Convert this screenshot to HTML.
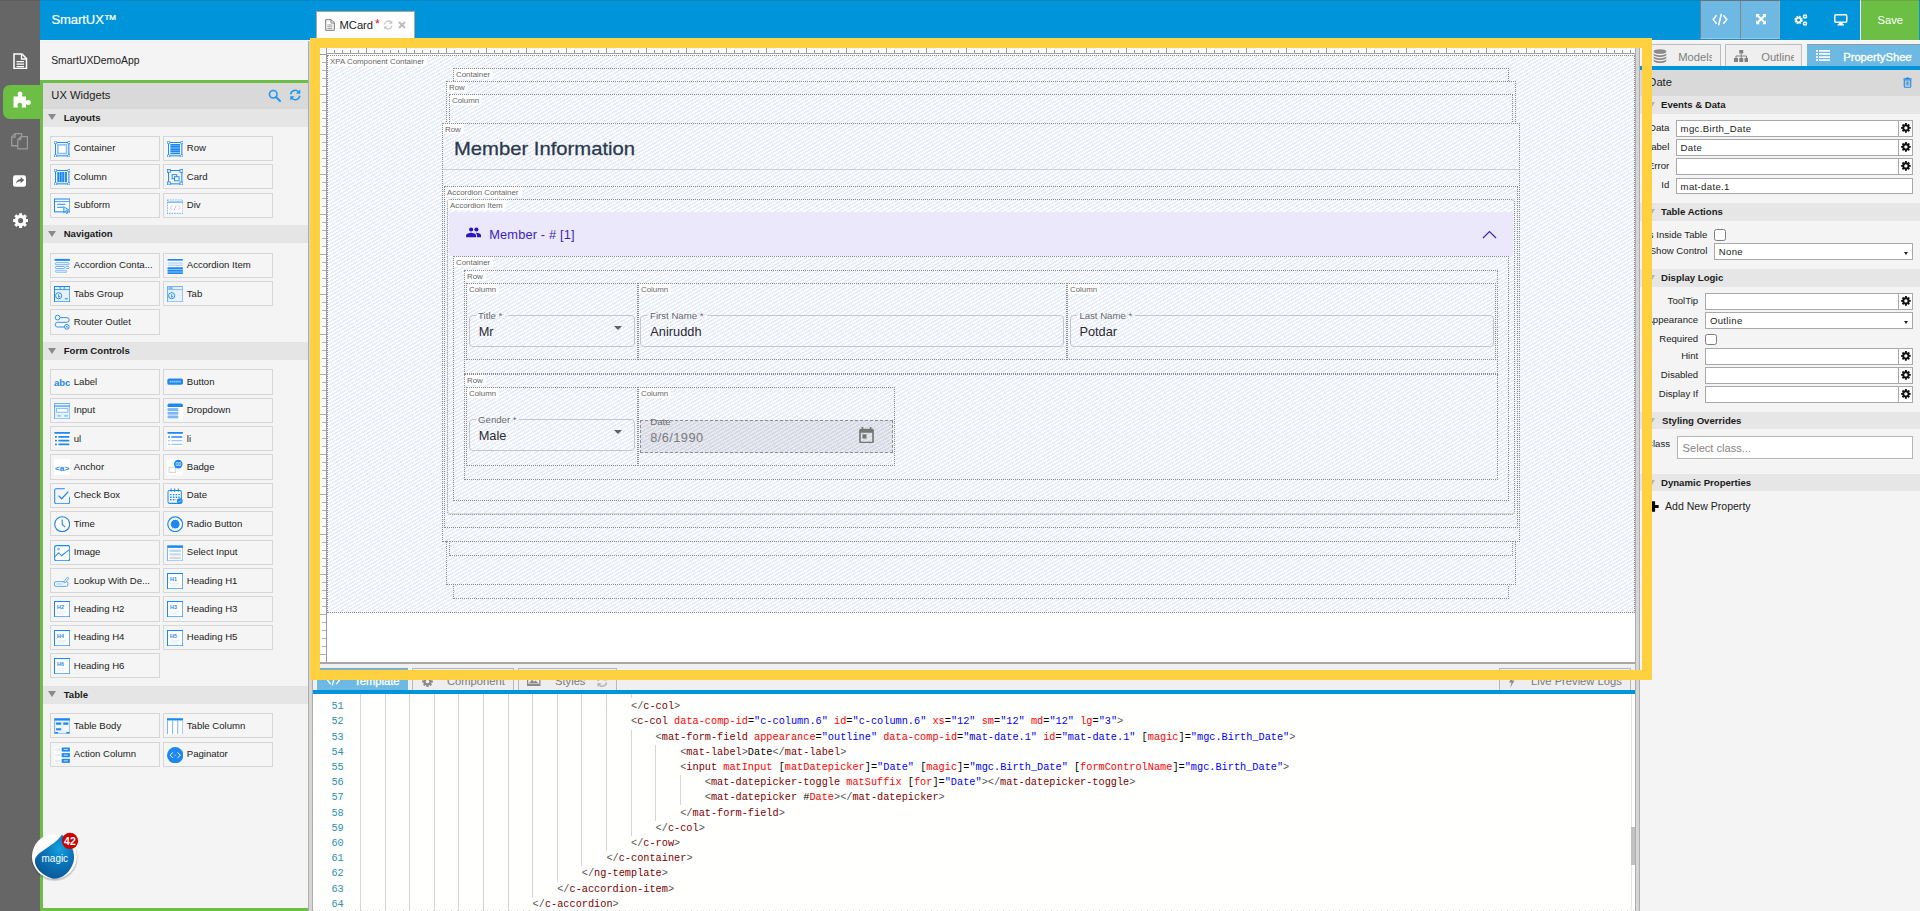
<!DOCTYPE html>
<html lang="en"><head><meta charset="utf-8"><title>SmartUX</title>
<style>
*{box-sizing:border-box;margin:0;padding:0}
html,body{width:1920px;height:911px;overflow:hidden;background:#f4f4f4}
body{position:relative;font-family:"Liberation Sans",sans-serif;font-size:9.6px;color:#222}
div,svg{position:absolute}
.t{white-space:nowrap;line-height:1}
.b{font-weight:bold}
.hatch{background-color:#fff;background-image:repeating-linear-gradient(150deg,#e6ecfe 0,#e6ecfe 1.6px,#fff 1.6px,#fff 3.2px)}
.dz{border:1px dotted #8e8e8e}
.lab{background:#fff;color:#666;font-size:7.9px;line-height:11.6px;height:10px;padding:0 3px 0 2px;white-space:nowrap;border-radius:0 0 2px 0}
.wi{border:1px solid #d6d6d6;background:#f5f5f5;width:109.6px;height:24.6px}
.wi .t{left:22.750px;top:5.75px;font-size:9.6px;color:#222}
.wi svg{left:2.7px;top:3.9px;width:16.4px;height:16.4px}
.sh{background:#e5e5e5}
.sh .t{font-weight:bold;font-size:9.6px;top:3.6px;color:#1a1a1a}
.tri{width:0;height:0;border-left:4.7px solid transparent;border-right:4.7px solid transparent;border-top:6px solid #8a8a8a}
.inp{background:#fff;border:1px solid #a9a9a9;height:16px}
.inp .t{left:3.300px;top:2.900px;font-size:9.600px;letter-spacing:0.330px;color:#222}
.gb{background:#fff;border:1px solid #a9a9a9;border-left:none;height:16px;width:15px}
.pl{font-size:9.6px;color:#222;text-align:right;white-space:nowrap;line-height:1}
.code{font-family:"Liberation Mono",monospace;font-size:10.25px;white-space:pre;line-height:15.2px;height:15.2px;color:#000}
.tg{color:#800000}.an{color:#ff0000}.av{color:#0000ff}.dl{color:#555}
.ln{white-space:nowrap;font-family:"Liberation Mono",monospace;font-size:10.25px;line-height:15.2px;color:#2b91af;text-align:right;width:30px}
.rb{font-family:"Liberation Sans",sans-serif}
</style></head>
<body>
<div style="left:40px;top:0px;width:1880px;height:40px;background:#0095da"></div><div class="t" style="left:51.4px;top:12.9px;color:#fff;font-size:13px;letter-spacing:-0.05px;-webkit-text-stroke:0.200px #fff">SmartUX&trade;</div><div style="left:316px;top:11px;width:98.5px;height:28px;background:#fff;border-top:1px solid #aaa09c;border-left:1px solid #b0a8a4;border-right:1px solid #b0a8a4"></div><svg style="left:325px;top:19px;width:10px;height:12px" viewBox="0 0 10 12"><path d="M0.7 0.7h5.6l3 3v7.6h-8.6z" fill="#fff" stroke="#777" stroke-width="1"/><path d="M6 0.7v3.3h3.3" fill="none" stroke="#777" stroke-width="0.9"/><path d="M2.3 6h5M2.3 7.8h5M2.3 9.6h5" stroke="#888" stroke-width="0.8"/></svg><div class="t" style="left:339.5px;top:19.6px;font-size:11.2px;color:#222">MCard</div><div class="t" style="left:375px;top:17.6px;font-size:12.5px;color:#d32030">*</div><svg style="left:383px;top:20px;width:10.5px;height:10px" viewBox="0 0 21 20"><path d="M3 9a7.5 7.5 0 0 1 13-4.5M18 11a7.5 7.5 0 0 1-13 4.5" fill="none" stroke="#c4c4c4" stroke-width="2.6"/><path d="M18.5 1v6.5h-6.5zM2.5 19v-6.5h6.5z" fill="#c4c4c4"/></svg><svg style="left:397.5px;top:21px;width:8px;height:8px" viewBox="0 0 8 8"><path d="M1 1l6 6M7 1l-6 6" stroke="#bdbdbd" stroke-width="2.1"/></svg><div style="left:1700px;top:0px;width:40px;height:39px;background:#6db9e3;border-top:1px solid #6b7f8c;border-left:1px solid #7d7d7d;border-bottom:1px solid #bdbdbd"></div><div style="left:1740px;top:0px;width:40px;height:39px;background:#6db9e3;border-top:1px solid #6b7f8c;border-left:1px solid #858585;border-bottom:1px solid #bdbdbd;border-right:1px solid #a3b1ba"></div><svg style="left:1712px;top:13px;width:16px;height:13px" viewBox="0 0 16 13"><path d="M4.6 2.2L1.2 6.5l3.4 4.3M11.4 2.2l3.4 4.3-3.4 4.3M9.4 0.8L6.6 12.2" fill="none" stroke="#fff" stroke-width="1.5"/></svg><svg style="left:1755.600px;top:14.400px;width:10.200px;height:10.200px" viewBox="0 0 11 11"><path d="M0 0h4.2L2.9 1.3 5.5 3.9 8.1 1.3 6.8 0H11v4.2L9.7 2.9 7.1 5.5 9.7 8.1 11 6.8V11H6.8l1.3-1.3L5.5 7.1 2.9 9.7 4.2 11H0V6.8l1.3 1.3L3.9 5.5 1.3 2.9 0 4.2z" fill="#fff"/></svg><svg style="left:1794px;top:14px;width:14px;height:12px" viewBox="0 0 14 12"><circle cx="4.6" cy="6" r="3" fill="none" stroke="#fff" stroke-width="2.3" stroke-dasharray="1.6 0.75"/><circle cx="4.6" cy="6" r="2.3" fill="none" stroke="#fff" stroke-width="1.6"/><circle cx="11" cy="2.6" r="1.5" fill="none" stroke="#fff" stroke-width="1.5"/><circle cx="11" cy="9.4" r="1.5" fill="none" stroke="#fff" stroke-width="1.5"/></svg><svg style="left:1834px;top:14px;width:13.5px;height:11.5px" viewBox="0 0 27 23"><rect x="1.5" y="1.5" width="24" height="15" rx="2.5" fill="none" stroke="#fff" stroke-width="3"/><path d="M10 17h7l1 4h-9z M7 20.5h13v2.5h-13z" fill="#fff"/></svg><div style="left:1860px;top:0px;width:1px;height:40px;background:#f4fbff"></div><div style="left:1861px;top:0px;width:58px;height:40px;background:#6cbe45"></div><div class="t" style="left:1877.5px;top:15.1px;color:#fff;font-size:11.2px">Save</div><div style="left:0px;top:0px;width:40px;height:911px;background:#666"></div><div style="left:3px;top:85px;width:40px;height:34px;background:#6cbe45;border-radius:7px 0 0 7px"></div><svg style="left:13px;top:52.5px;width:14.5px;height:16.5px" viewBox="0 0 29 33"><path d="M2 2h16l9 9v20h-25z" fill="none" stroke="#fff" stroke-width="3"/><path d="M17 2v10h10" fill="none" stroke="#fff" stroke-width="2.6"/><path d="M7 16h15v2.6h-15zM7 21h15v2.6h-15zM7 26h15v2.6h-15z" fill="#fff"/></svg><svg style="left:12.7px;top:90px;width:18px;height:17.5px" viewBox="0 0 36 35"><path d="M1 13h8.5c1 0 1.4-.8.9-1.8C9.6 9.900 9.3 9 9.300 7.800 9.300 5 11.500 3 14.200 3s4.900 2 4.900 4.800c0 1.200-.4 2.200-1 3.300-.5 1-.2 1.900.8 1.900H26v7.200c0 1 .8 1.400 1.800.9 1-.6 2-1 3.200-1 2.700 0 4.700 2.200 4.700 4.900s-2 4.900-4.700 4.900c-1.200 0-2.200-.4-3.200-1-1-.5-1.800-.1-1.800.9V35h-7.500c-1 0-1.400-.800-.9-1.800.6-1 1-2 1-3.200 0-2.700-2.200-4.700-4.900-4.700S8.800 27.300 8.800 30c0 1.200.4 2.200 1 3.200.5 1 .1 1.800-.9 1.800H1z" fill="#fff"/></svg><svg style="left:11.300px;top:133px;width:17.200px;height:16.500px" viewBox="0 0 34.400 33"><path d="M8.300 1.300h13.200v24.200h-20.200v-17.200z" fill="none" stroke="#9c9c9c" stroke-width="2.600" stroke-linejoin="round"/><path d="M8.300 1.300v7h-7" fill="none" stroke="#9c9c9c" stroke-width="2.400"/><path d="M19.600 7.400h13.400v24.300h-19.400v-18.300z" fill="#666" stroke="#9c9c9c" stroke-width="2.600" stroke-linejoin="round"/><path d="M19.600 7.400v6h-6" fill="none" stroke="#9c9c9c" stroke-width="2.400"/></svg><svg style="left:13.200px;top:175px;width:13px;height:12px" viewBox="0 0 29 26"><rect x="0" y="0" width="29" height="26" rx="5" fill="#fff"/><path d="M17 4l8 7-8 7v-4.300c-5 0-8 1.500-10.500 5.300 0.500-6 4-10 10.500-10.700z" fill="#666"/></svg><svg style="left:12.700px;top:213.300px;width:15.200px;height:15.200px" viewBox="0 0 20 20"><path fill-rule="evenodd" d="M17.35 8.05L19.81 8.05L19.81 11.95L17.35 11.95L16.57 13.82L18.31 15.56L15.56 18.31L13.82 16.57L11.95 17.35L11.95 19.81L8.05 19.81L8.05 17.35L6.18 16.57L4.44 18.31L1.69 15.56L3.43 13.82L2.65 11.95L0.19 11.95L0.19 8.05L2.65 8.05L3.43 6.18L1.69 4.44L4.44 1.69L6.18 3.43L8.05 2.65L8.05 0.19L11.95 0.19L11.95 2.65L13.82 3.43L15.56 1.69L18.31 4.44L16.57 6.18ZM13.40 10.00A3.4 3.4 0 1 0 6.60 10.00A3.4 3.4 0 1 0 13.40 10.00Z" fill="#fff"/></svg><div style="left:40px;top:40px;width:268px;height:871px;background:#f4f4f4"></div><div class="t" style="left:51.2px;top:55.5px;font-size:10.4px;color:#222">SmartUXDemoApp</div><div style="left:40px;top:80px;width:268px;height:3px;background:#6cbe45"></div><div style="left:40px;top:80px;width:3px;height:831px;background:#6cbe45"></div><div style="left:40px;top:908px;width:268px;height:3px;background:#6cbe45"></div><div style="left:43px;top:83px;width:265px;height:26px;background:#d9d9d9"></div><div class="t" style="left:51.3px;top:90px;font-size:11.2px;color:#1c1c1c">UX Widgets</div><svg style="left:267.5px;top:88.5px;width:13px;height:13px" viewBox="0 0 26 26"><circle cx="10.5" cy="10.5" r="7.6" fill="none" stroke="#2196f3" stroke-width="3.2"/><path d="M16 16l8 8" stroke="#2196f3" stroke-width="4" stroke-linecap="round"/></svg><svg style="left:288.5px;top:89px;width:12.5px;height:12px" viewBox="0 0 25 24"><path d="M3.5 10.500a9 9 0 0 1 15.500-5M21.500 13.500a9 9 0 0 1-15.500 5" fill="none" stroke="#2196f3" stroke-width="3.3"/><path d="M22.500 1v8.500h-8.500zM2.500 23v-8.500h8.500z" fill="#2196f3"/></svg><div class="sh" style="left:43px;top:108.8px;width:265px;height:17.8px;"><div class="tri" style="left:4.800px;top:5.600px"></div><div class="t b" style="left:20.7px;top:3.85px;">Layouts</div></div><div class="wi" style="left:50px;top:136.00px;height:25px"><svg viewBox="0 0 16 16"><rect x="1.5" y="1.5" width="13" height="13" fill="#fff" stroke="#1e88f0" stroke-width="1"/><rect x="3.800" y="3.800" width="8.400" height="8.400" fill="#fff" stroke="#8ec0f7" stroke-width="1.600"/><circle cx="1.5" cy="1.5" r="1.3" fill="#fff" stroke="#1e88f0" stroke-width="0.8"/><circle cx="14.5" cy="1.5" r="1.3" fill="#fff" stroke="#1e88f0" stroke-width="0.8"/><circle cx="1.5" cy="14.5" r="1.3" fill="#fff" stroke="#1e88f0" stroke-width="0.8"/><circle cx="14.5" cy="14.5" r="1.3" fill="#fff" stroke="#1e88f0" stroke-width="0.8"/></svg><div class="t" style="top:5.75px">Container</div></div><div class="wi" style="left:163px;top:136.00px;height:25px"><svg viewBox="0 0 16 16"><rect x="1.5" y="1.5" width="13" height="13" fill="#fff" stroke="#1e88f0" stroke-width="1"/><path d="M3.200 3.700h9.600M3.200 5.800h9.600M3.200 7.900h9.600M3.200 10h9.600M3.200 12.100h9.600" stroke="#1e88f0" stroke-width="1.700"/><circle cx="1.5" cy="1.5" r="1.3" fill="#fff" stroke="#1e88f0" stroke-width="0.8"/><circle cx="14.5" cy="1.5" r="1.3" fill="#fff" stroke="#1e88f0" stroke-width="0.8"/><circle cx="1.5" cy="14.5" r="1.3" fill="#fff" stroke="#1e88f0" stroke-width="0.8"/><circle cx="14.5" cy="14.5" r="1.3" fill="#fff" stroke="#1e88f0" stroke-width="0.8"/></svg><div class="t" style="top:5.75px">Row</div></div><div class="wi" style="left:50px;top:164.00px;height:25px"><svg viewBox="0 0 16 16"><rect x="1.5" y="1.5" width="13" height="13" fill="#fff" stroke="#1e88f0" stroke-width="1"/><path d="M4.200 3v10M6.600 3v10M9 3v10M11.600 3v10" stroke="#1e88f0" stroke-width="2"/><circle cx="1.5" cy="1.5" r="1.3" fill="#fff" stroke="#1e88f0" stroke-width="0.8"/><circle cx="14.5" cy="1.5" r="1.3" fill="#fff" stroke="#1e88f0" stroke-width="0.8"/><circle cx="1.5" cy="14.5" r="1.3" fill="#fff" stroke="#1e88f0" stroke-width="0.8"/><circle cx="14.5" cy="14.5" r="1.3" fill="#fff" stroke="#1e88f0" stroke-width="0.8"/></svg><div class="t" style="top:6.75px">Column</div></div><div class="wi" style="left:163px;top:164.00px;height:25px"><svg viewBox="0 0 16 16"><rect x="1.5" y="1.5" width="13" height="13" fill="none" stroke="#1e88f0" stroke-width="1"/><rect x="5" y="5.500" width="4.500" height="4" fill="none" stroke="#1e88f0" stroke-width="0.9"/><rect x="7.300" y="7.500" width="4.500" height="4" fill="#f4f4f4" stroke="#1e88f0" stroke-width="0.9"/><rect x="0.4" y="0.4" width="3" height="3" fill="#cfe3fb" stroke="#1e88f0" stroke-width="0.7"/><rect x="12.6" y="0.4" width="3" height="3" fill="#cfe3fb" stroke="#1e88f0" stroke-width="0.7"/><rect x="0.4" y="12.6" width="3" height="3" fill="#cfe3fb" stroke="#1e88f0" stroke-width="0.7"/><rect x="12.6" y="12.6" width="3" height="3" fill="#cfe3fb" stroke="#1e88f0" stroke-width="0.7"/></svg><div class="t" style="top:6.75px">Card</div></div><div class="wi" style="left:50px;top:193.00px;height:25px"><svg viewBox="0 0 16 16"><rect x="0.500" y="1" width="15" height="12.500" fill="#fff" stroke="#1e88f0" stroke-width="1"/><path d="M0.500 3.500h15" stroke="#1e88f0" stroke-width="0.8"/><path d="M3 6h8M3 9h6" stroke="#1e88f0" stroke-width="1"/><path d="M9.500 8.500l5 3.200-2.200.5 1.200 2.500-1.200.6-1.200-2.500-1.600 1.500z" fill="#cfe3fb" stroke="#1e88f0" stroke-width="0.8"/></svg><div class="t" style="top:5.75px">Subform</div></div><div class="wi" style="left:163px;top:193.00px;height:25px"><svg viewBox="0 0 16 16"><rect x="0.500" y="2" width="15" height="13" fill="#fff" stroke="#7db6f5" stroke-width="1" stroke-dasharray="1.500 1"/><path d="M0.500 4h15" stroke="#7db6f5" stroke-width="1.500"/><path d="M5 7.500l-2 2 2 2M11 7.500l2 2-2 2M9 7l-2 5" fill="none" stroke="#c5b8f0" stroke-width="0.9"/></svg><div class="t" style="top:5.75px">Div</div></div><div class="sh" style="left:43px;top:225px;width:265px;height:17.8px;"><div class="tri" style="left:4.800px;top:5.600px"></div><div class="t b" style="left:20.7px;top:3.85px;">Navigation</div></div><div class="wi" style="left:50px;top:253.00px;height:25px"><svg viewBox="0 0 16 16"><rect x="0" y="0" width="16" height="16" fill="#fff"/><path d="M0.500 1.800h15" stroke="#1e88f0" stroke-width="2"/><rect x="1.200" y="4.600" width="13.600" height="2" rx="0.800" fill="#fff" stroke="#4b9cf3" stroke-width="0.800"/><rect x="1.200" y="8.300" width="9" height="2" rx="0.800" fill="#fff" stroke="#4b9cf3" stroke-width="0.800"/><rect x="11.400" y="8.300" width="3.400" height="2" rx="0.800" fill="#fff" stroke="#4b9cf3" stroke-width="0.800"/><rect x="1.200" y="12" width="11.500" height="2" rx="0.800" fill="#dbeafd" stroke="#7db6f5" stroke-width="0.800"/></svg><div class="t" style="top:5.75px">Accordion Conta...</div></div><div class="wi" style="left:163px;top:253.00px;height:25px"><svg viewBox="0 0 16 16"><rect x="0" y="0" width="16" height="16" fill="#fff"/><path d="M0.500 1.800h15" stroke="#1e88f0" stroke-width="1.600"/><path d="M0.500 4.800h15M0.500 7h15" stroke="#b9d6fa" stroke-width="1.400"/><path d="M0.500 10h15M0.500 12.500h15M0.500 15h15" stroke="#1e88f0" stroke-width="2"/></svg><div class="t" style="top:5.75px">Accordion Item</div></div><div class="wi" style="left:50px;top:281.00px;height:25px"><svg viewBox="0 0 16 16"><rect x="0.500" y="0.500" width="15" height="15" fill="#e8f2fe" stroke="#1e88f0" stroke-width="1"/><path d="M0.500 3.500h15M6 0.500v3M10 0.500v3" stroke="#1e88f0" stroke-width="0.8"/><circle cx="4.500" cy="9.500" r="3" fill="none" stroke="#1e88f0" stroke-width="0.9"/><path d="M4.500 8v3l1.500-1" fill="none" stroke="#1e88f0" stroke-width="0.8"/><path d="M10.500 12.500h3" stroke="#1e88f0" stroke-width="1"/></svg><div class="t" style="top:6.75px">Tabs Group</div></div><div class="wi" style="left:163px;top:281.00px;height:25px"><svg viewBox="0 0 16 16"><rect x="0.500" y="0.500" width="15" height="15" fill="#e8f2fe" stroke="#6fb0f6" stroke-width="1"/><path d="M0.500 3.500h15" stroke="#6fb0f6" stroke-width="0.8"/><path d="M1.500 2h4" stroke="#1e88f0" stroke-width="1"/><circle cx="4.500" cy="9.500" r="3" fill="none" stroke="#1e88f0" stroke-width="0.9"/><path d="M4.500 8v3l1.500-1" fill="none" stroke="#1e88f0" stroke-width="0.800"/></svg><div class="t" style="top:6.75px">Tab</div></div><div class="wi" style="left:50px;top:309.00px;height:26px"><svg viewBox="0 0 16 16"><circle cx="3.500" cy="3.500" r="2.300" fill="none" stroke="#1e88f0" stroke-width="0.9"/><circle cx="12.500" cy="12.500" r="2.300" fill="none" stroke="#1e88f0" stroke-width="0.900"/><path d="M6 3.500h6.500a2.300 2.300 0 0 1 0 4.600h-9a2.300 2.300 0 0 0 0 4.600h6.500" fill="none" stroke="#1e88f0" stroke-width="0.900"/><path d="M11.600 11.600l1.800 1.800M13.400 11.600l-1.800 1.800" stroke="#1e88f0" stroke-width="0.700"/></svg><div class="t" style="top:6.75px">Router Outlet</div></div><div class="sh" style="left:43px;top:342px;width:265px;height:17.8px;"><div class="tri" style="left:4.800px;top:5.600px"></div><div class="t b" style="left:20.7px;top:3.85px;">Form Controls</div></div><div class="wi" style="left:50px;top:369.00px;height:26px"><svg viewBox="0 0 16 16"><text x="0" y="12" font-family="Liberation Sans,sans-serif" font-weight="bold" font-size="9.500" fill="#1e88f0" textLength="16" lengthAdjust="spacingAndGlyphs">abc</text></svg><div class="t" style="top:6.75px">Label</div></div><div class="wi" style="left:163px;top:369.00px;height:26px"><svg viewBox="0 0 16 16"><rect x="0.300" y="4.500" width="15.400" height="6" rx="1.800" fill="#1e88f0"/><path d="M2.500 7.500h11" stroke="#a8cffa" stroke-width="1.600" stroke-dasharray="1.300 0.600"/></svg><div class="t" style="top:6.75px">Button</div></div><div class="wi" style="left:50px;top:398.00px;height:25px"><svg viewBox="0 0 16 16"><rect x="0.500" y="0.500" width="15" height="15" fill="#e8f2fe" stroke="#6fb0f6" stroke-width="1"/><path d="M0.500 3h15" stroke="#1e88f0" stroke-width="1"/><rect x="2.500" y="5.500" width="11" height="3.500" fill="#fff" stroke="#6fb0f6" stroke-width="0.800"/><path d="M3.500 12.500h3M10 12.500h3.500" stroke="#6fb0f6" stroke-width="1.200"/></svg><div class="t" style="top:5.75px">Input</div></div><div class="wi" style="left:163px;top:398.00px;height:25px"><svg viewBox="0 0 16 16"><rect x="0" y="0" width="16" height="16" rx="1.500" fill="#fff"/><path d="M0.500 4V2a1.500 1.500 0 0 1 1.500-1.500h12a1.500 1.500 0 0 1 1.500 1.500v2z" fill="#1e88f0"/><rect x="0.500" y="5" width="10.500" height="2.800" fill="#7db6f5"/><rect x="0.500" y="8.600" width="10.500" height="2.800" fill="#7db6f5"/><rect x="0.500" y="12.200" width="10.500" height="2.800" fill="#7db6f5"/></svg><div class="t" style="top:5.75px">Dropdown</div></div><div class="wi" style="left:50px;top:426.00px;height:25px"><svg viewBox="0 0 16 16"><rect x="0" y="0" width="16" height="16" rx="1.500" fill="#fff"/><path d="M0.500 1.800h15" stroke="#1e88f0" stroke-width="1.800"/><path d="M1 5.800h1.800M4.300 5.800h10.700M1 9.400h1.800M4.300 9.400h10.700M1 13h1.800M4.300 13h10.700" stroke="#1e88f0" stroke-width="1.700"/></svg><div class="t" style="top:6.75px">ul</div></div><div class="wi" style="left:163px;top:426.00px;height:25px"><svg viewBox="0 0 16 16"><rect x="0" y="0" width="16" height="16" rx="1.500" fill="#fff"/><path d="M0.500 1.800h15" stroke="#1e88f0" stroke-width="1.800"/><path d="M1 5.800h1.800M4.300 5.800h10.700" stroke="#1e88f0" stroke-width="1.500"/><path d="M1 9.400h1.800M4.300 9.400h10.700M1 13h1.800M4.300 13h10.700" stroke="#9cc8f8" stroke-width="1.300"/></svg><div class="t" style="top:6.75px">li</div></div><div class="wi" style="left:50px;top:454.00px;height:26px"><svg viewBox="0 0 16 16"><rect x="0" y="0" width="16" height="16" rx="1.500" fill="#fff"/><text x="1" y="11.500" font-family="Liberation Sans,sans-serif" font-weight="bold" font-size="7.500" fill="#1e88f0" textLength="14" lengthAdjust="spacingAndGlyphs">&lt;a&gt;</text></svg><div class="t" style="top:6.75px">Anchor</div></div><div class="wi" style="left:163px;top:454.00px;height:26px"><svg viewBox="0 0 16 16"><rect x="0" y="0" width="16" height="16" rx="1.500" fill="#fff"/><rect x="2" y="8" width="6.500" height="5" fill="none" stroke="#c8c8c8" stroke-width="0.800"/><circle cx="11" cy="5" r="4.200" fill="#1e88f0"/><text x="8.300" y="7" font-family="Liberation Sans,sans-serif" font-size="5" fill="#fff">00</text></svg><div class="t" style="top:6.75px">Badge</div></div><div class="wi" style="left:50px;top:483.00px;height:25px"><svg viewBox="0 0 16 16"><path d="M15.300 8.500v5.300a1.500 1.500 0 0 1-1.500 1.500h-11.600a1.500 1.500 0 0 1-1.500-1.500v-11.600a1.500 1.500 0 0 1 1.500-1.500h8.300" fill="none" stroke="#1e88f0" stroke-width="1"/><path d="M4.500 7.500l3 3 6.500-7" fill="none" stroke="#1e88f0" stroke-width="1.200"/></svg><div class="t" style="top:5.75px">Check Box</div></div><div class="wi" style="left:163px;top:483.00px;height:25px"><svg viewBox="0 0 16 16"><rect x="1" y="2.500" width="13" height="12.500" rx="1.500" fill="#fff" stroke="#1e88f0" stroke-width="1"/><path d="M4 0.500v3.500M7.500 0.500v3.500M11 0.500v3.500" stroke="#1e88f0" stroke-width="1"/><path d="M3 6.500h9.500M3 9h9.500M3 11.500h6" stroke="#1e88f0" stroke-width="1.300" stroke-dasharray="1.500 1.200"/><circle cx="12.500" cy="12.800" r="2.800" fill="#1e88f0"/><path d="M11.300 12.800l.9.900 1.600-1.700" fill="none" stroke="#fff" stroke-width="0.600"/></svg><div class="t" style="top:5.75px">Date</div></div><div class="wi" style="left:50px;top:511.00px;height:25px"><svg viewBox="0 0 16 16"><circle cx="8" cy="8" r="7.300" fill="#fff" stroke="#1e88f0" stroke-width="1.100"/><path d="M8 3.500v4.800l3 2.500" fill="none" stroke="#1e88f0" stroke-width="1.100"/></svg><div class="t" style="top:6.75px">Time</div></div><div class="wi" style="left:163px;top:511.00px;height:25px"><svg viewBox="0 0 16 16"><circle cx="8" cy="8" r="7.200" fill="#fff" stroke="#1e88f0" stroke-width="1.200"/><circle cx="8" cy="8" r="4.300" fill="#1e88f0"/></svg><div class="t" style="top:6.75px">Radio Button</div></div><div class="wi" style="left:50px;top:540.00px;height:25px"><svg viewBox="0 0 16 16"><rect x="0.600" y="0.600" width="14.800" height="14.800" rx="2" fill="#fff" stroke="#1e88f0" stroke-width="1"/><path d="M1 11.500l3.500-4 3 3 3-2.500 4.500-3.500" fill="none" stroke="#1e88f0" stroke-width="1"/><circle cx="4.500" cy="4" r="0.900" fill="none" stroke="#1e88f0" stroke-width="0.700"/></svg><div class="t" style="top:5.75px">Image</div></div><div class="wi" style="left:163px;top:540.00px;height:25px"><svg viewBox="0 0 16 16"><rect x="0.500" y="0.500" width="15" height="15" fill="#fff" stroke="#7db6f5" stroke-width="1"/><path d="M0.500 1.800h15" stroke="#1e88f0" stroke-width="2"/><rect x="2.500" y="4.500" width="11" height="2.300" fill="#b9d6fa"/><rect x="2.500" y="8" width="11" height="2.300" fill="#cfd8e6"/><rect x="2.500" y="11.500" width="11" height="2.300" fill="#cfd8e6"/></svg><div class="t" style="top:5.75px">Select Input</div></div><div class="wi" style="left:50px;top:568.00px;height:25px"><svg viewBox="0 0 16 16"><rect x="0.500" y="8.500" width="13" height="4.500" rx="1.300" fill="#fff" stroke="#4b9cf3" stroke-width="0.900"/><path d="M2.500 10.800h6" stroke="#4b9cf3" stroke-width="1" stroke-dasharray="1 0.800"/><path d="M10 8l3-4 1.500 1-3 4-1.800.700z" fill="#fff" stroke="#4b9cf3" stroke-width="0.800"/></svg><div class="t" style="top:6.75px">Lookup With De...</div></div><div class="wi" style="left:163px;top:568.00px;height:25px"><svg viewBox="0 0 16 16"><rect x="0.500" y="0.500" width="15" height="15" fill="#fff" stroke="#1e88f0" stroke-width="1"/><text x="3" y="7.800" font-family="Liberation Sans,sans-serif" font-weight="bold" font-size="5.200" fill="#1e88f0">H1</text><path d="M3 10.500h9M3 12.500h7" stroke="#e3ecf8" stroke-width="1"/></svg><div class="t" style="top:6.75px">Heading H1</div></div><div class="wi" style="left:50px;top:596.00px;height:26px"><svg viewBox="0 0 16 16"><rect x="0.500" y="0.500" width="15" height="15" fill="#fff" stroke="#1e88f0" stroke-width="1"/><text x="3" y="7.800" font-family="Liberation Sans,sans-serif" font-weight="bold" font-size="5.200" fill="#1e88f0">H2</text><path d="M3 10.500h9M3 12.500h7" stroke="#e3ecf8" stroke-width="1"/></svg><div class="t" style="top:6.75px">Heading H2</div></div><div class="wi" style="left:163px;top:596.00px;height:26px"><svg viewBox="0 0 16 16"><rect x="0.500" y="0.500" width="15" height="15" fill="#fff" stroke="#1e88f0" stroke-width="1"/><text x="3" y="7.800" font-family="Liberation Sans,sans-serif" font-weight="bold" font-size="5.200" fill="#1e88f0">H3</text><path d="M3 10.500h9M3 12.500h7" stroke="#e3ecf8" stroke-width="1"/></svg><div class="t" style="top:6.75px">Heading H3</div></div><div class="wi" style="left:50px;top:625.00px;height:25px"><svg viewBox="0 0 16 16"><rect x="0.500" y="0.500" width="15" height="15" fill="#fff" stroke="#1e88f0" stroke-width="1"/><text x="3" y="7.800" font-family="Liberation Sans,sans-serif" font-weight="bold" font-size="5.200" fill="#1e88f0">H4</text><path d="M3 10.500h9M3 12.500h7" stroke="#e3ecf8" stroke-width="1"/></svg><div class="t" style="top:5.75px">Heading H4</div></div><div class="wi" style="left:163px;top:625.00px;height:25px"><svg viewBox="0 0 16 16"><rect x="0.500" y="0.500" width="15" height="15" fill="#fff" stroke="#1e88f0" stroke-width="1"/><text x="3" y="7.800" font-family="Liberation Sans,sans-serif" font-weight="bold" font-size="5.200" fill="#1e88f0">H5</text><path d="M3 10.500h9M3 12.500h7" stroke="#e3ecf8" stroke-width="1"/></svg><div class="t" style="top:5.75px">Heading H5</div></div><div class="wi" style="left:50px;top:653.00px;height:25px"><svg viewBox="0 0 16 16"><rect x="0.500" y="0.500" width="15" height="15" fill="#fff" stroke="#1e88f0" stroke-width="1"/><text x="3" y="7.800" font-family="Liberation Sans,sans-serif" font-weight="bold" font-size="5.200" fill="#1e88f0">H6</text><path d="M3 10.500h9M3 12.500h7" stroke="#e3ecf8" stroke-width="1"/></svg><div class="t" style="top:6.75px">Heading H6</div></div><div class="sh" style="left:43px;top:685.8px;width:265px;height:17.8px;"><div class="tri" style="left:4.800px;top:5.600px"></div><div class="t b" style="left:20.7px;top:3.85px;">Table</div></div><div class="wi" style="left:50px;top:713.00px;height:25px"><svg viewBox="0 0 16 16"><rect x="0.500" y="0.500" width="15" height="15" fill="#e8f2fe" stroke="#7db6f5" stroke-width="1"/><path d="M0.500 1.500h15" stroke="#1e88f0" stroke-width="2"/><path d="M2 5.500h5M9 5.500h5M2 11h5" stroke="#1e88f0" stroke-width="2"/><path d="M9 8.300h5M2 8.300h5M9 11h5" stroke="#fff" stroke-width="1.800"/><path d="M1 14.500h3M12 14.500h3" stroke="#1e88f0" stroke-width="1.500"/></svg><div class="t" style="top:6.75px">Table Body</div></div><div class="wi" style="left:163px;top:713.00px;height:25px"><svg viewBox="0 0 16 16"><rect x="0" y="0" width="16" height="16" fill="#fff"/><path d="M0 1.300h16" stroke="#1e88f0" stroke-width="2.200"/><path d="M0.500 2v13.500M5.500 2v13.500M10.500 2v13.500M15.500 2v13.500" stroke="#7db6f5" stroke-width="1"/></svg><div class="t" style="top:6.75px">Table Column</div></div><div class="wi" style="left:50px;top:742.00px;height:25px"><svg viewBox="0 0 16 16"><rect x="0" y="0" width="16" height="16" fill="#fff"/><path d="M1 2.500h5M1 8h5M1 13.500h5" stroke="#e3ecf8" stroke-width="2"/><rect x="7.500" y="0.500" width="8" height="4" fill="#1e88f0"/><rect x="7.500" y="6" width="8" height="4" fill="#1e88f0"/><rect x="7.500" y="11.500" width="8" height="4" fill="#1e88f0"/><path d="M9.500 2.500h4M9.500 8h4M9.500 13.500h4" stroke="#d5e8fd" stroke-width="0.900"/></svg><div class="t" style="top:5.75px">Action Column</div></div><div class="wi" style="left:163px;top:742.00px;height:25px"><svg viewBox="0 0 16 16"><circle cx="8" cy="8" r="8" fill="#1e88f0"/><path d="M5.800 5.300l-2.800 2.700 2.800 2.700M10.200 5.300l2.800 2.700-2.800 2.700" fill="none" stroke="#fff" stroke-width="0.900"/><path d="M7 8h2" stroke="#9cc8f8" stroke-width="0.800"/></svg><div class="t" style="top:5.75px">Paginator</div></div><svg style="left:24px;top:826px;width:64px;height:64px;overflow:visible" viewBox="0 0 64 64"><defs><radialGradient id="mg" cx="0.62" cy="0.32" r="0.7"><stop offset="0" stop-color="#12a3df"/><stop offset="0.45" stop-color="#0b78bd"/><stop offset="1" stop-color="#0a5a9a"/></radialGradient></defs><circle cx="30.400" cy="32" r="23.300" fill="rgba(0,0,0,0.100)"/><circle cx="30.400" cy="31.300" r="22.900" fill="rgba(0,0,0,0.120)"/><circle cx="30.400" cy="30.500" r="22.500" fill="#fdfdfd"/><path d="M37.900 8.800C35 13 30 17.500 21.100 23.200C16 26.500 11 30 10.900 35C10.800 41 17 49 28.100 52.400C36 54 46 48 49.500 36C52 27 47 16 37.900 8.800Z" fill="url(#mg)"/><text x="17.600" y="35.600" font-family="Liberation Sans,sans-serif" font-size="10.800" fill="#fff" textLength="26.500" lengthAdjust="spacingAndGlyphs">magic</text><circle cx="46" cy="14.900" r="8.100" fill="#cc0000"/><text x="40.100" y="18.700" font-family="Liberation Sans,sans-serif" font-weight="bold" font-size="10.500" fill="#fff">42</text></svg><div style="left:308px;top:40px;width:5px;height:871px;background:#d6d6d6;border-left:1px solid #adadad;border-right:1px solid #adadad"></div>
<!-- design canvas -->
<div style="left:313px;top:40px;width:1322px;height:622px;background:#fff"></div><div style="left:326px;top:47px;width:1309px;height:7px;border-bottom:1px solid #a2a2a2;background-image:repeating-linear-gradient(90deg,#9a9a9a 0,#9a9a9a 1px,transparent 1px,transparent 40px),repeating-linear-gradient(90deg,#9a9a9a 0,#9a9a9a 1px,transparent 1px,transparent 8px);background-size:100% 100%,100% 3px;background-position:0 0,0 3px;background-repeat:no-repeat"></div><div style="left:320px;top:54px;width:7px;height:608px;border-right:1px solid #9a9a9a;background-image:repeating-linear-gradient(180deg,#b0b0b0 0,#b0b0b0 1px,transparent 1px,transparent 40px),repeating-linear-gradient(180deg,#b0b0b0 0,#b0b0b0 1px,transparent 1px,transparent 8px);background-size:100% 100%,4px 100%;background-position:0 0,2px 0;background-repeat:no-repeat"></div><div style="left:320px;top:54px;width:7px;height:1px;background:#9a9a9a"></div><div class="dz hatch" style="left:327px;top:55px;width:1308px;height:558px;"><div class="lab" style="left:0;top:0">XPA Component Container</div></div><div class="dz hatch" style="left:453px;top:68px;width:1056px;height:531px;"><div class="lab" style="left:0;top:0">Container</div></div><div class="dz hatch" style="left:446px;top:81px;width:1070px;height:43px;border-bottom:none"><div class="lab" style="left:0;top:0">Row</div></div><div class="dz hatch" style="left:449px;top:94px;width:1064px;height:30px;border-bottom:none"><div class="lab" style="left:0;top:0">Column</div></div><div class="dz hatch" style="left:442px;top:123px;width:1078px;height:419px;"><div class="lab" style="left:0;top:0">Row</div></div><div class="t" style="left:453.6px;top:138.9px;font-size:19px;color:#2c3a4a;-webkit-text-stroke:0.300px #2c3a4a;transform:scaleX(1.065);transform-origin:0 0">Member Information</div><div style="left:443px;top:169px;width:1076px;height:1px;background:#cfcfd4"></div><div class="dz hatch" style="left:444px;top:186px;width:1074px;height:342px;"><div class="lab" style="left:0;top:0">Accordion Container</div></div><div class="dz hatch" style="left:447px;top:199px;width:1068px;height:316px;border-radius:4px;box-shadow:inset 0 -1px 0 #d8d8d8"><div class="lab" style="left:0;top:0">Accordion Item</div></div><div style="left:449px;top:212px;width:1064px;height:43.6px;background:#ebe8fb;border-radius:2px 2px 0 0"></div><svg style="left:466px;top:227px;width:15.200px;height:10.600px" viewBox="0 0 24 17"><circle cx="8" cy="4" r="3.300" fill="#2a14c8"/><circle cx="16.500" cy="4" r="3.300" fill="#2a14c8"/><path d="M0 16.500v-3c0-2.700 5.300-4.300 8-4.300s8 1.600 8 4.300v3z" fill="#2a14c8"/><path d="M17.500 16.500v-3.200c0-1.600-.9-2.900-2.200-3.800.400-.100.800-.100 1.200-.100 2.700 0 7.500 1.500 7.500 4.100v3z" fill="#2a14c8"/></svg><div class="t" style="left:489.3px;top:228.7px;font-size:12.800px;color:#3a1fc4;letter-spacing:0.150px">Member - # [1]</div><svg style="left:1481.500px;top:229.500px;width:15px;height:9px" viewBox="0 0 15 9"><path d="M1 8l6.500-6.500L14 8" fill="none" stroke="#3a1fc4" stroke-width="1.100"/></svg><div class="dz hatch" style="left:453px;top:256px;width:1056px;height:245px;"><div class="lab" style="left:0;top:0">Container</div></div><div class="dz hatch" style="left:464px;top:270px;width:1034px;height:104px;"><div class="lab" style="left:0;top:0">Row</div></div><div class="dz hatch" style="left:466px;top:283px;width:172px;height:77px;"><div class="lab" style="left:0;top:0">Column</div></div><div class="dz hatch" style="left:638px;top:283px;width:429px;height:77px;"><div class="lab" style="left:0;top:0">Column</div></div><div class="dz hatch" style="left:1067px;top:283px;width:429px;height:77px;"><div class="lab" style="left:0;top:0">Column</div></div><div class="dz hatch" style="left:464px;top:374px;width:1034px;height:106px;"><div class="lab" style="left:0;top:0">Row</div></div><div class="dz hatch" style="left:466px;top:387px;width:172px;height:79px;"><div class="lab" style="left:0;top:0">Column</div></div><div class="dz hatch" style="left:638px;top:387px;width:257px;height:79px;"><div class="lab" style="left:0;top:0">Column</div></div><div class="dz hatch" style="left:446px;top:541px;width:1070px;height:44px;"></div><div class="dz hatch" style="left:449px;top:541px;width:1064px;height:15px;"></div><div style="left:469.3px;top:315.4px;width:165.99999999999994px;height:31.200000000000045px;border:1px solid #c6c6cc;border-radius:4px"></div><div class="hatch" style="left:475.8px;top:314.4px;width:32px;height:3px;"></div><div class="t" style="left:478.1px;top:310.9px;font-size:9.600px;color:#6a6a6a">Title *</div><div class="t" style="left:478.7px;top:326.09999999999997px;font-size:12.800px;color:#2b2b2b">Mr</div><div class="tri" style="left:614.1999999999999px;top:326.4px;border-left-width:4.400px;border-right-width:4.400px;border-top:4.400px solid #616161"></div><div style="left:640.3px;top:315.4px;width:423.9000000000001px;height:31.200000000000045px;border:1px solid #c6c6cc;border-radius:4px"></div><div class="hatch" style="left:646.8px;top:314.4px;width:60px;height:3px;"></div><div class="t" style="left:650.0999999999999px;top:310.9px;font-size:9.600px;color:#6a6a6a">First Name *</div><div class="t" style="left:650.3px;top:326.09999999999997px;font-size:12.800px;color:#2b2b2b">Aniruddh</div><div style="left:1070px;top:315.4px;width:423.5px;height:31.200000000000045px;border:1px solid #c6c6cc;border-radius:4px"></div><div class="hatch" style="left:1076.5px;top:314.4px;width:58px;height:3px;"></div><div class="t" style="left:1079.3999999999999px;top:310.9px;font-size:9.600px;color:#6a6a6a">Last Name *</div><div class="t" style="left:1079.4px;top:326.09999999999997px;font-size:12.800px;color:#2b2b2b">Potdar</div><div style="left:469.3px;top:419.4px;width:165.99999999999994px;height:31.200000000000045px;border:1px solid #c6c6cc;border-radius:4px"></div><div class="hatch" style="left:475.8px;top:418.4px;width:43px;height:3px;"></div><div class="t" style="left:478.1px;top:414.9px;font-size:9.600px;color:#6a6a6a">Gender *</div><div class="t" style="left:478.7px;top:430.09999999999997px;font-size:12.800px;color:#2b2b2b">Male</div><div class="tri" style="left:614.1999999999999px;top:430.4px;border-left-width:4.400px;border-right-width:4.400px;border-top:4.400px solid #616161"></div><div style="left:640.2px;top:420px;width:253px;height:32.6px;background:rgba(60,60,70,0.110);border:1px dashed #8f8f8f"></div><div class="t" style="left:650.3px;top:416.9px;font-size:9.600px;color:#707070">Date</div><div class="t" style="left:650.3px;top:432.2px;font-size:12.800px;color:#7a7a7a;letter-spacing:0.420px">8/6/1990</div><svg style="left:859px;top:426.800px;width:15px;height:16.300px" viewBox="0 0 18 20"><path d="M16 2h-1V0h-2v2H5V0H3v2H2C0.900 2 0 2.900 0 4v14c0 1.100.9 2 2 2h14c1.100 0 2-.9 2-2V4c0-1.100-.9-2-2-2zm0 16H2V7h14v11zM4 9h5v5H4z" fill="#757575"/></svg><div style="left:313px;top:662px;width:1322px;height:2px;background:#a8a8a8"></div><div style="left:313px;top:664px;width:1322px;height:26px;background:#f0f0f0"></div>
<!-- editor tabs -->
<div style="left:317px;top:668px;width:90.5px;height:22px;background:#6db9e3;border-top:1px solid #8aa;"></div><svg style="left:326px;top:675px;width:15px;height:11px" viewBox="0 0 16 13"><path d="M4.600 2.200L1.200 6.500l3.400 4.300M11.400 2.200l3.400 4.300-3.400 4.300M9.400 0.800L6.600 12.200" fill="none" stroke="#fff" stroke-width="1.500"/></svg><div class="t" style="left:354.2px;top:676.4px;font-size:11.200px;color:#fff;-webkit-text-stroke:0.300px #fff">Template</div><div style="left:412px;top:668px;width:101.5px;height:22px;background:#eee;border:1px solid #b9b9b9;border-bottom:none;"></div><svg style="left:421.500px;top:676px;width:11px;height:11px" viewBox="0 0 20 20"><path fill-rule="evenodd" d="M17.35 8.05L19.81 8.05L19.81 11.95L17.35 11.95L16.57 13.82L18.31 15.56L15.56 18.31L13.82 16.57L11.95 17.35L11.95 19.81L8.05 19.81L8.05 17.35L6.18 16.57L4.44 18.31L1.69 15.56L3.43 13.82L2.65 11.95L0.19 11.95L0.19 8.05L2.65 8.05L3.43 6.18L1.69 4.44L4.44 1.69L6.18 3.43L8.05 2.65L8.05 0.19L11.95 0.19L11.95 2.65L13.82 3.43L15.56 1.69L18.31 4.44L16.57 6.18ZM13.40 10.00A3.4 3.4 0 1 0 6.60 10.00A3.4 3.4 0 1 0 13.40 10.00Z" fill="#8a8a8a"/></svg><div class="t" style="left:447px;top:676.4px;font-size:11.200px;color:#7a7a7a">Component</div><div style="left:518px;top:668px;width:98.70000000000005px;height:22px;background:#eee;border:1px solid #b9b9b9;border-bottom:none;"></div><svg style="left:527px;top:676px;width:13.500px;height:10px" viewBox="0 0 27 20"><rect x="0" y="0" width="27" height="20" fill="#8a8a8a"/><rect x="2.500" y="2.500" width="22" height="13" fill="#eee"/><path d="M4 14.500l6-7 4 4 3-2.500 6 5.500z" fill="#8a8a8a"/></svg><div class="t" style="left:555px;top:676.4px;font-size:11.200px;color:#7a7a7a">Styles</div><svg style="left:595.500px;top:675.500px;width:12.500px;height:11.500px" viewBox="0 0 25 24"><path d="M3.500 10.500a9 9 0 0 1 15.500-5M21.500 13.500a9 9 0 0 1-15.500 5" fill="none" stroke="#b8b8b8" stroke-width="3.300"/><path d="M22.500 1v8.500h-8.500zM2.500 23v-8.500h8.500z" fill="#b8b8b8"/></svg><div style="left:1499px;top:668px;width:131.5px;height:22px;background:#eee;border:1px solid #b9b9b9;border-bottom:none;"></div><svg style="left:1507.500px;top:675.500px;width:7px;height:12px" viewBox="0 0 7 12"><path d="M4.500 0L1 6.500h2.500L2 12l4.500-7.500H4z" fill="#8a8a8a"/></svg><div class="t" style="left:1531px;top:676.4px;font-size:11.200px;color:#7a7a7a">Live Preview Logs</div><div style="left:313px;top:690px;width:1322px;height:4px;background:#0095da"></div>
<!-- code editor -->
<div style="left:313px;top:694px;width:1322px;height:217px;background:#fffffe"></div><div style="left:360.0px;top:694px;width:1px;height:217.9px;background:#d6d6d6"></div><div style="left:384.6px;top:694px;width:1px;height:217.9px;background:#d6d6d6"></div><div style="left:409.2px;top:694px;width:1px;height:217.9px;background:#d6d6d6"></div><div style="left:433.8px;top:694px;width:1px;height:217.9px;background:#d6d6d6"></div><div style="left:458.4px;top:694px;width:1px;height:217.9px;background:#d6d6d6"></div><div style="left:483.0px;top:694px;width:1px;height:217.9px;background:#d6d6d6"></div><div style="left:507.6px;top:694px;width:1px;height:217.9px;background:#d6d6d6"></div><div style="left:532.2px;top:694px;width:1px;height:202.7px;background:#d6d6d6"></div><div style="left:556.8px;top:694px;width:1px;height:187.5px;background:#d6d6d6"></div><div style="left:581.4px;top:694px;width:1px;height:172.3px;background:#d6d6d6"></div><div style="left:606.0px;top:694px;width:1px;height:157.1px;background:#d6d6d6"></div><div style="left:630.6px;top:729.5px;width:1px;height:106.4px;background:#d6d6d6"></div><div style="left:655.2px;top:744.7px;width:1px;height:76.0px;background:#d6d6d6"></div><div style="left:679.8px;top:775.1px;width:1px;height:30.4px;background:#d6d6d6"></div><div style="left:630.6px;top:694px;width:1px;height:4px;background:#d6d6d6"></div><div class="ln" style="left:313.700px;top:699.1px">51</div><div class="code" style="left:631.0px;top:699.1px"><span class="dl">&lt;/</span><span class="tg">c-col</span><span class="dl">&gt;</span></div><div class="ln" style="left:313.700px;top:714.3px">52</div><div class="code" style="left:631.0px;top:714.3px"><span class="dl">&lt;</span><span class="tg">c-col</span> <span class="an">data-comp-id</span>=<span class="av">&quot;c-column.6&quot;</span> <span class="an">id</span>=<span class="av">&quot;c-column.6&quot;</span> <span class="an">xs</span>=<span class="av">&quot;12&quot;</span> <span class="an">sm</span>=<span class="av">&quot;12&quot;</span> <span class="an">md</span>=<span class="av">&quot;12&quot;</span> <span class="an">lg</span>=<span class="av">&quot;3&quot;</span><span class="dl">&gt;</span></div><div class="ln" style="left:313.700px;top:729.5px">53</div><div class="code" style="left:655.6px;top:729.5px"><span class="dl">&lt;</span><span class="tg">mat-form-field</span> <span class="an">appearance</span>=<span class="av">&quot;outline&quot;</span> <span class="an">data-comp-id</span>=<span class="av">&quot;mat-date.1&quot;</span> <span class="an">id</span>=<span class="av">&quot;mat-date.1&quot;</span> [<span class="an">magic</span>]=<span class="av">&quot;mgc.Birth_Date&quot;</span><span class="dl">&gt;</span></div><div class="ln" style="left:313.700px;top:744.7px">54</div><div class="code" style="left:680.2px;top:744.7px"><span class="dl">&lt;</span><span class="tg">mat-label</span><span class="dl">&gt;</span>Date<span class="dl">&lt;/</span><span class="tg">mat-label</span><span class="dl">&gt;</span></div><div class="ln" style="left:313.700px;top:759.9px">55</div><div class="code" style="left:680.2px;top:759.9px"><span class="dl">&lt;</span><span class="tg">input</span> <span class="an">matInput</span> [<span class="an">matDatepicker</span>]=<span class="av">&quot;Date&quot;</span> [<span class="an">magic</span>]=<span class="av">&quot;mgc.Birth_Date&quot;</span> [<span class="an">formControlName</span>]=<span class="av">&quot;mgc.Birth_Date&quot;</span><span class="dl">&gt;</span></div><div class="ln" style="left:313.700px;top:775.1px">56</div><div class="code" style="left:704.8px;top:775.1px"><span class="dl">&lt;</span><span class="tg">mat-datepicker-toggle</span> <span class="an">matSuffix</span> [<span class="an">for</span>]=<span class="av">&quot;Date&quot;</span><span class="dl">&gt;</span><span class="dl">&lt;/</span><span class="tg">mat-datepicker-toggle</span><span class="dl">&gt;</span></div><div class="ln" style="left:313.700px;top:790.3px">57</div><div class="code" style="left:704.8px;top:790.3px"><span class="dl">&lt;</span><span class="tg">mat-datepicker</span> #<span class="an">Date</span><span class="dl">&gt;</span><span class="dl">&lt;/</span><span class="tg">mat-datepicker</span><span class="dl">&gt;</span></div><div class="ln" style="left:313.700px;top:805.5px">58</div><div class="code" style="left:680.2px;top:805.5px"><span class="dl">&lt;/</span><span class="tg">mat-form-field</span><span class="dl">&gt;</span></div><div class="ln" style="left:313.700px;top:820.7px">59</div><div class="code" style="left:655.6px;top:820.7px"><span class="dl">&lt;/</span><span class="tg">c-col</span><span class="dl">&gt;</span></div><div class="ln" style="left:313.700px;top:835.9px">60</div><div class="code" style="left:631.0px;top:835.9px"><span class="dl">&lt;/</span><span class="tg">c-row</span><span class="dl">&gt;</span></div><div class="ln" style="left:313.700px;top:851.1px">61</div><div class="code" style="left:606.4px;top:851.1px"><span class="dl">&lt;/</span><span class="tg">c-container</span><span class="dl">&gt;</span></div><div class="ln" style="left:313.700px;top:866.3px">62</div><div class="code" style="left:581.8px;top:866.3px"><span class="dl">&lt;/</span><span class="tg">ng-template</span><span class="dl">&gt;</span></div><div class="ln" style="left:313.700px;top:881.5px">63</div><div class="code" style="left:557.2px;top:881.5px"><span class="dl">&lt;/</span><span class="tg">c-accordion-item</span><span class="dl">&gt;</span></div><div class="ln" style="left:313.700px;top:896.7px">64</div><div class="code" style="left:532.6px;top:896.7px"><span class="dl">&lt;/</span><span class="tg">c-accordion</span><span class="dl">&gt;</span></div><div style="left:1631px;top:694px;width:1px;height:217px;background:#e6e6e6"></div><div style="left:1631px;top:827px;width:4px;height:38px;background:#c1c1c1"></div><div style="left:313px;top:910px;width:1322px;height:1px;background-image:repeating-linear-gradient(90deg,#d8d8d8 0,#d8d8d8 1px,transparent 1px,transparent 6px)"></div><div style="left:1635px;top:40px;width:5px;height:871px;background:#d6d6d6;border-left:1px solid #adadad;border-right:1px solid #adadad"></div>
<!-- property sheet -->
<div style="left:1640px;top:40px;width:280px;height:871px;background:#f4f4f4"></div><div style="left:1643.4px;top:44px;width:77.19999999999982px;height:22px;background:#efefef;border:1px solid #bdbdbd;border-bottom:none"></div><svg style="left:1652.500px;top:48.800px;width:14px;height:14px" viewBox="0 0 14 14"><ellipse cx="7" cy="2.500" rx="6.300" ry="2.300" fill="#8a8a8a"/><path d="M0.700 3.9c0 1.250 2.800 2.250 6.300 2.250s6.300-1 6.300-2.250v1.900c0 1.250-2.800 2.250-6.300 2.250S0.700 7.05 0.700 5.80zM0.700 6.9c0 1.250 2.800 2.250 6.300 2.250s6.300-1 6.300-2.250v1.900c0 1.250-2.800 2.250-6.300 2.250S0.700 10.05 0.700 8.80zM0.700 9.9c0 1.250 2.800 2.250 6.300 2.250s6.300-1 6.300-2.250v1.900c0 1.250-2.800 2.250-6.300 2.250S0.700 13.05 0.700 11.80z" fill="#8a8a8a"/></svg><div style="left:1678.3px;top:50px;width:34px;height:14px;overflow:hidden"><div class="t" style="left:0px;top:2.1px;font-size:11.200px;color:#808080">Models</div></div><div style="left:1725.2px;top:44px;width:77.29999999999995px;height:22px;background:#efefef;border:1px solid #bdbdbd;border-bottom:none"></div><svg style="left:1733.700px;top:50px;width:14.500px;height:12px" viewBox="0 0 29 24"><path d="M10.500 0h8v7h-8zM0 16h8v8h-8zM10.500 16h8v8h-8zM21 16h8v8h-8z" fill="#808080"/><path d="M14.500 7v5M4 16v-4h21v4M14.500 12v4" fill="none" stroke="#808080" stroke-width="2"/></svg><div style="left:1761.2px;top:50px;width:33px;height:14px;overflow:hidden"><div class="t" style="left:0px;top:2.1px;font-size:11.200px;color:#808080">Outline</div></div><div style="left:1807px;top:44px;width:113px;height:22px;background:#6db9e3;border-top:1px solid #8a9aa5"></div><svg style="left:1815.600px;top:50px;width:14.500px;height:11px" viewBox="0 0 29 22"><path d="M0 0h4v3.500h-4zM6 0h23v3.500h-23zM0 6.200h4v3.500h-4zM6 6.200h23v3.500h-23zM0 12.400h4v3.500h-4zM6 12.400h23v3.500h-23zM0 18.500h4v3.500h-4zM6 18.500h23v3.500h-23z" fill="#fff"/></svg><div style="left:1843.2px;top:50px;width:68.5px;height:14px;overflow:hidden"><div class="t" style="left:0px;top:2.1px;font-size:11.200px;color:#fff;-webkit-text-stroke:0.350px #fff">PropertySheet</div></div><div style="left:1639.5px;top:66px;width:280.5px;height:3.6px;background:#0095da"></div><div style="left:1639.5px;top:69.6px;width:280.5px;height:26px;background:#d9d9d9"></div><div class="t" style="left:1648.3px;top:76.6px;font-size:11.200px;color:#1c1c1c">Date</div><svg style="left:1902.500px;top:77px;width:9px;height:10.500px" viewBox="0 0 18 21"><path d="M6.500 0.800h5l1 1.700h4.500v2.300h-16v-2.300h4.500z" fill="#1e88e5"/><path d="M2.500 6h13v12.500a2 2 0 0 1-2 2h-9a2 2 0 0 1-2-2z" fill="none" stroke="#1e88e5" stroke-width="2.200"/><path d="M6.300 8.500v8.500M9 8.500v8.500M11.700 8.500v8.500" stroke="#1e88e5" stroke-width="1.500"/></svg><div style="left:1639.5px;top:96px;width:280.5px;height:17.8px;background:#e6e6e6"></div><div class="tri" style="left:1649px;top:102px;border-left-width:3.500px;border-right-width:3.500px;border-top:5px solid #b4b4b4"></div><div class="t b" style="left:1661px;top:100.3px;font-size:9.600px;color:#1a1a1a">Events &amp; Data</div><div class="pl" style="left:1549.3px;width:120px;top:122.7px">Data</div><div class="inp" style="left:1676.3px;top:120px;width:222.4px;height:17px"><div class="t">mgc.Birth_Date</div></div><div class="gb" style="left:1898.700px;top:120px;width:14.800px;height:17px"><svg viewBox="0 0 20 20" style="left:2.200px;top:2.300px;width:9.800px;height:9.800px"><path fill-rule="evenodd" d="M17.35 8.05L19.81 8.05L19.81 11.95L17.35 11.95L16.57 13.82L18.31 15.56L15.56 18.31L13.82 16.57L11.95 17.35L11.95 19.81L8.05 19.81L8.05 17.35L6.18 16.57L4.44 18.31L1.69 15.56L3.43 13.82L2.65 11.95L0.19 11.95L0.19 8.05L2.65 8.05L3.43 6.18L1.69 4.44L4.44 1.69L6.18 3.43L8.05 2.65L8.05 0.19L11.95 0.19L11.95 2.65L13.82 3.43L15.56 1.69L18.31 4.44L16.57 6.18ZM13.40 10.00A3.4 3.4 0 1 0 6.60 10.00A3.4 3.4 0 1 0 13.40 10.00Z" fill="#111"/></svg></div><div class="pl" style="left:1549.3px;width:120px;top:141.7px">Label</div><div class="inp" style="left:1676.3px;top:139px;width:222.4px;height:17px"><div class="t">Date</div></div><div class="gb" style="left:1898.700px;top:139px;width:14.800px;height:17px"><svg viewBox="0 0 20 20" style="left:2.200px;top:2.300px;width:9.800px;height:9.800px"><path fill-rule="evenodd" d="M17.35 8.05L19.81 8.05L19.81 11.95L17.35 11.95L16.57 13.82L18.31 15.56L15.56 18.31L13.82 16.57L11.95 17.35L11.95 19.81L8.05 19.81L8.05 17.35L6.18 16.57L4.44 18.31L1.69 15.56L3.43 13.82L2.65 11.95L0.19 11.95L0.19 8.05L2.65 8.05L3.43 6.18L1.69 4.44L4.44 1.69L6.18 3.43L8.05 2.65L8.05 0.19L11.95 0.19L11.95 2.65L13.82 3.43L15.56 1.69L18.31 4.44L16.57 6.18ZM13.40 10.00A3.4 3.4 0 1 0 6.60 10.00A3.4 3.4 0 1 0 13.40 10.00Z" fill="#111"/></svg></div><div class="pl" style="left:1549.3px;width:120px;top:160.7px">Error</div><div class="inp" style="left:1676.3px;top:158px;width:222.4px;height:17px"></div><div class="gb" style="left:1898.700px;top:158px;width:14.800px;height:17px"><svg viewBox="0 0 20 20" style="left:2.200px;top:2.300px;width:9.800px;height:9.800px"><path fill-rule="evenodd" d="M17.35 8.05L19.81 8.05L19.81 11.95L17.35 11.95L16.57 13.82L18.31 15.56L15.56 18.31L13.82 16.57L11.95 17.35L11.95 19.81L8.05 19.81L8.05 17.35L6.18 16.57L4.44 18.31L1.69 15.56L3.43 13.82L2.65 11.95L0.19 11.95L0.19 8.05L2.65 8.05L3.43 6.18L1.69 4.44L4.44 1.69L6.18 3.43L8.05 2.65L8.05 0.19L11.95 0.19L11.95 2.65L13.82 3.43L15.56 1.69L18.31 4.44L16.57 6.18ZM13.40 10.00A3.4 3.4 0 1 0 6.60 10.00A3.4 3.4 0 1 0 13.40 10.00Z" fill="#111"/></svg></div><div class="pl" style="left:1549.3px;width:120px;top:180.2px">Id</div><div class="inp" style="left:1676.3px;top:178px;width:237.2px;height:16px"><div class="t">mat-date.1</div></div><div style="left:1639.5px;top:202.7px;width:280.5px;height:18.1px;background:#e6e6e6"></div><div class="tri" style="left:1649px;top:208.7px;border-left-width:3.500px;border-right-width:3.500px;border-top:5px solid #b4b4b4"></div><div class="t b" style="left:1661px;top:207.14999999999998px;font-size:9.600px;color:#1a1a1a">Table Actions</div><div class="pl" style="left:1587.3px;width:120px;top:229.75px">Is Inside Table</div><div style="left:1714.2px;top:229.1px;width:12.3px;height:11.7px;background:#fff;border:1px solid #7c7c7c;border-radius:2.500px"></div><div class="pl" style="left:1587.3px;width:120px;top:245.7px">Show Control</div><div class="inp" style="left:1714.2px;top:243px;width:199.3px;height:17px"><div class="t" style="left:3.600px;top:3.400px">None</div><div class="tri" style="left:189.3px;top:7.500px;border-left-width:2.500px;border-right-width:2.500px;border-top:3px solid #222"></div></div><div style="left:1639.5px;top:268.8px;width:280.5px;height:18.1px;background:#e6e6e6"></div><div class="tri" style="left:1649px;top:274.8px;border-left-width:3.500px;border-right-width:3.500px;border-top:5px solid #b4b4b4"></div><div class="t b" style="left:1661px;top:273.25px;font-size:9.600px;color:#1a1a1a">Display Logic</div><div class="pl" style="left:1578.2px;width:120px;top:295.7px">ToolTip</div><div class="inp" style="left:1705.3px;top:293px;width:193.4px;height:17px"></div><div class="gb" style="left:1898.700px;top:293px;width:14.800px;height:17px"><svg viewBox="0 0 20 20" style="left:2.200px;top:2.300px;width:9.800px;height:9.800px"><path fill-rule="evenodd" d="M17.35 8.05L19.81 8.05L19.81 11.95L17.35 11.95L16.57 13.82L18.31 15.56L15.56 18.31L13.82 16.57L11.95 17.35L11.95 19.81L8.05 19.81L8.05 17.35L6.18 16.57L4.44 18.31L1.69 15.56L3.43 13.82L2.65 11.95L0.19 11.95L0.19 8.05L2.65 8.05L3.43 6.18L1.69 4.44L4.44 1.69L6.18 3.43L8.05 2.65L8.05 0.19L11.95 0.19L11.95 2.65L13.82 3.43L15.56 1.69L18.31 4.44L16.57 6.18ZM13.40 10.00A3.4 3.4 0 1 0 6.60 10.00A3.4 3.4 0 1 0 13.40 10.00Z" fill="#111"/></svg></div><div class="pl" style="left:1578.2px;width:120px;top:314.7px">Appearance</div><div class="inp" style="left:1705.3px;top:312px;width:208.2px;height:17px"><div class="t" style="left:3.600px;top:3.400px">Outline</div><div class="tri" style="left:198.2px;top:7.500px;border-left-width:2.500px;border-right-width:2.500px;border-top:3px solid #222"></div></div><div class="pl" style="left:1578.2px;width:120px;top:334.25px">Required</div><div style="left:1705.3px;top:333.5px;width:11.5px;height:11.9px;background:#fff;border:1px solid #7c7c7c;border-radius:2.500px"></div><div class="pl" style="left:1578.2px;width:120px;top:350.7px">Hint</div><div class="inp" style="left:1705.3px;top:348px;width:193.4px;height:17px"></div><div class="gb" style="left:1898.700px;top:348px;width:14.800px;height:17px"><svg viewBox="0 0 20 20" style="left:2.200px;top:2.300px;width:9.800px;height:9.800px"><path fill-rule="evenodd" d="M17.35 8.05L19.81 8.05L19.81 11.95L17.35 11.95L16.57 13.82L18.31 15.56L15.56 18.31L13.82 16.57L11.95 17.35L11.95 19.81L8.05 19.81L8.05 17.35L6.18 16.57L4.44 18.31L1.69 15.56L3.43 13.82L2.65 11.95L0.19 11.95L0.19 8.05L2.65 8.05L3.43 6.18L1.69 4.44L4.44 1.69L6.18 3.43L8.05 2.65L8.05 0.19L11.95 0.19L11.95 2.65L13.82 3.43L15.56 1.69L18.31 4.44L16.57 6.18ZM13.40 10.00A3.4 3.4 0 1 0 6.60 10.00A3.4 3.4 0 1 0 13.40 10.00Z" fill="#111"/></svg></div><div class="pl" style="left:1578.2px;width:120px;top:369.7px">Disabled</div><div class="inp" style="left:1705.3px;top:367px;width:193.4px;height:17px"></div><div class="gb" style="left:1898.700px;top:367px;width:14.800px;height:17px"><svg viewBox="0 0 20 20" style="left:2.200px;top:2.300px;width:9.800px;height:9.800px"><path fill-rule="evenodd" d="M17.35 8.05L19.81 8.05L19.81 11.95L17.35 11.95L16.57 13.82L18.31 15.56L15.56 18.31L13.82 16.57L11.95 17.35L11.95 19.81L8.05 19.81L8.05 17.35L6.18 16.57L4.44 18.31L1.69 15.56L3.43 13.82L2.65 11.95L0.19 11.95L0.19 8.05L2.65 8.05L3.43 6.18L1.69 4.44L4.44 1.69L6.18 3.43L8.05 2.65L8.05 0.19L11.95 0.19L11.95 2.65L13.82 3.43L15.56 1.69L18.31 4.44L16.57 6.18ZM13.40 10.00A3.4 3.4 0 1 0 6.60 10.00A3.4 3.4 0 1 0 13.40 10.00Z" fill="#111"/></svg></div><div class="pl" style="left:1578.2px;width:120px;top:388.7px">Display If</div><div class="inp" style="left:1705.3px;top:386px;width:193.4px;height:17px"></div><div class="gb" style="left:1898.700px;top:386px;width:14.800px;height:17px"><svg viewBox="0 0 20 20" style="left:2.200px;top:2.300px;width:9.800px;height:9.800px"><path fill-rule="evenodd" d="M17.35 8.05L19.81 8.05L19.81 11.95L17.35 11.95L16.57 13.82L18.31 15.56L15.56 18.31L13.82 16.57L11.95 17.35L11.95 19.81L8.05 19.81L8.05 17.35L6.18 16.57L4.44 18.31L1.69 15.56L3.43 13.82L2.65 11.95L0.19 11.95L0.19 8.05L2.65 8.05L3.43 6.18L1.69 4.44L4.44 1.69L6.18 3.43L8.05 2.65L8.05 0.19L11.95 0.19L11.95 2.65L13.82 3.43L15.56 1.69L18.31 4.44L16.57 6.18ZM13.40 10.00A3.4 3.4 0 1 0 6.60 10.00A3.4 3.4 0 1 0 13.40 10.00Z" fill="#111"/></svg></div><div style="left:1639.5px;top:411.8px;width:280.5px;height:17px;background:#e6e6e6"></div><div class="tri" style="left:1649px;top:417.8px;border-left-width:3.500px;border-right-width:3.500px;border-top:5px solid #b4b4b4"></div><div class="t b" style="left:1662px;top:415.7px;font-size:9.600px;color:#1a1a1a">Styling Overrides</div><div class="pl" style="left:1550px;width:120px;top:438.5px">Class</div><div class="inp" style="left:1677.300px;top:436px;width:236.200px;height:23px;border-color:#b5b5b5"><div class="t" style="left:4.300px;top:6.100px;font-size:11.100px;letter-spacing:0;color:#858585">Select class...</div></div><div style="left:1639.5px;top:474.3px;width:280.5px;height:17px;background:#e6e6e6"></div><div class="tri" style="left:1649px;top:480.3px;border-left-width:3.500px;border-right-width:3.500px;border-top:5px solid #b4b4b4"></div><div class="t b" style="left:1661px;top:478.2px;font-size:9.600px;color:#1a1a1a">Dynamic Properties</div><svg style="left:1648.400px;top:501px;width:11px;height:11px" viewBox="0 0 10 10"><path d="M5 0.300v9.400M0.300 5h9.400" stroke="#080808" stroke-width="2.900"/></svg><div class="t" style="left:1665px;top:501.2px;font-size:10.550px;color:#1c1c1c">Add New Property</div><div style="left:40px;top:40px;width:1880px;height:1px;background:#fcfaf8"></div><div style="left:0px;top:0px;width:1920px;height:1px;background:rgba(0,0,0,0.090)"></div>
<!-- highlight frame -->
<div style="left:310px;top:37.5px;width:1342px;height:642px;border:10px solid #ffd040"></div>
</body></html>
